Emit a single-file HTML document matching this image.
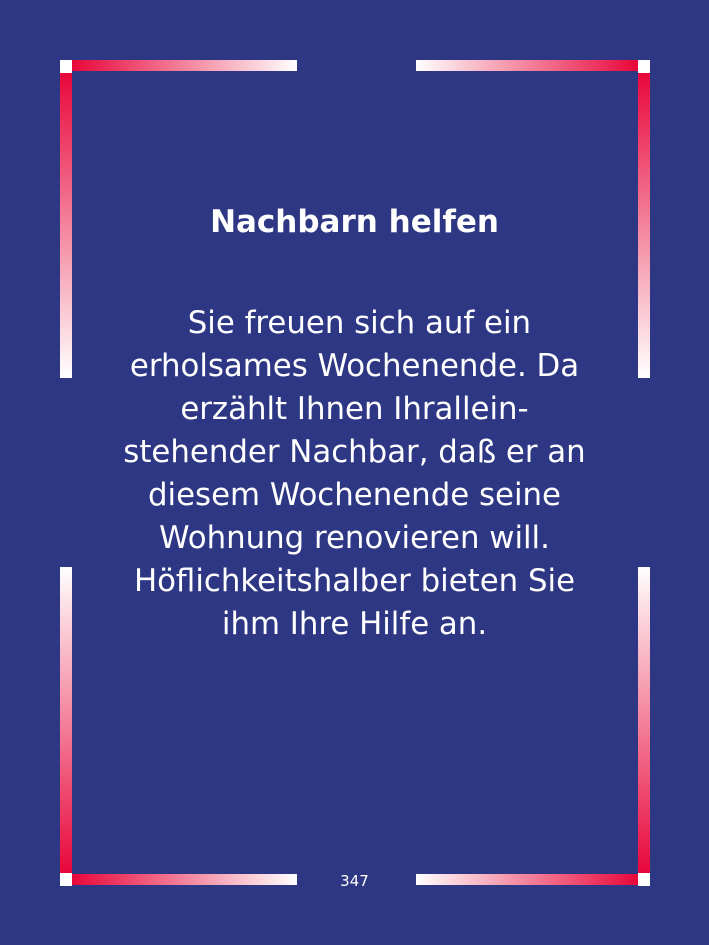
<!DOCTYPE html>
<html><head><style>
body{margin:0;width:709px;height:945px;background:#2e3784;position:relative;overflow:hidden;font-family:"DejaVu Sans",sans-serif;color:#fff}
.b{position:absolute}
.w{background:#fff;width:12px;height:13px}
</style></head><body>
<div class="b w" style="left:60px;top:60px"></div>
<div class="b w" style="left:638px;top:60px"></div>
<div class="b w" style="left:60px;top:873px"></div>
<div class="b w" style="left:638px;top:873px"></div>
<div class="b" style="left:72px;top:60px;width:225px;height:11px;background:linear-gradient(to right,#e8073a,#fff)"></div>
<div class="b" style="left:416px;top:60px;width:222px;height:11px;background:linear-gradient(to left,#e8073a,#fff)"></div>
<div class="b" style="left:72px;top:874px;width:225px;height:11px;background:linear-gradient(to right,#e8073a,#fff)"></div>
<div class="b" style="left:416px;top:874px;width:222px;height:11px;background:linear-gradient(to left,#e8073a,#fff)"></div>
<div class="b" style="left:60px;top:73px;width:12px;height:305px;background:linear-gradient(to bottom,#e8073a,#fff)"></div>
<div class="b" style="left:638px;top:73px;width:12px;height:305px;background:linear-gradient(to bottom,#e8073a,#fff)"></div>
<div class="b" style="left:60px;top:567px;width:12px;height:306px;background:linear-gradient(to top,#e8073a,#fff)"></div>
<div class="b" style="left:638px;top:567px;width:12px;height:306px;background:linear-gradient(to top,#e8073a,#fff)"></div>
<div class="b" style="left:0;width:709px;top:204px;text-align:center;font-weight:bold;font-size:31px">Nachbarn helfen</div>
<div class="b" style="left:50px;width:609px;top:302px;text-align:center;font-size:30.8px;line-height:43px">&nbsp;Sie freuen sich auf ein<br>erholsames Wochenende. Da<br>erzählt Ihnen Ihrallein-<br>stehender Nachbar, daß er an<br>diesem Wochenende seine<br>Wohnung renovieren will.<br>Höflichkeitshalber bieten Sie<br>ihm Ihre Hilfe an.</div>
<div class="b" style="left:0;width:709px;top:872px;text-align:center;font-size:15px">347</div>
</body></html>
